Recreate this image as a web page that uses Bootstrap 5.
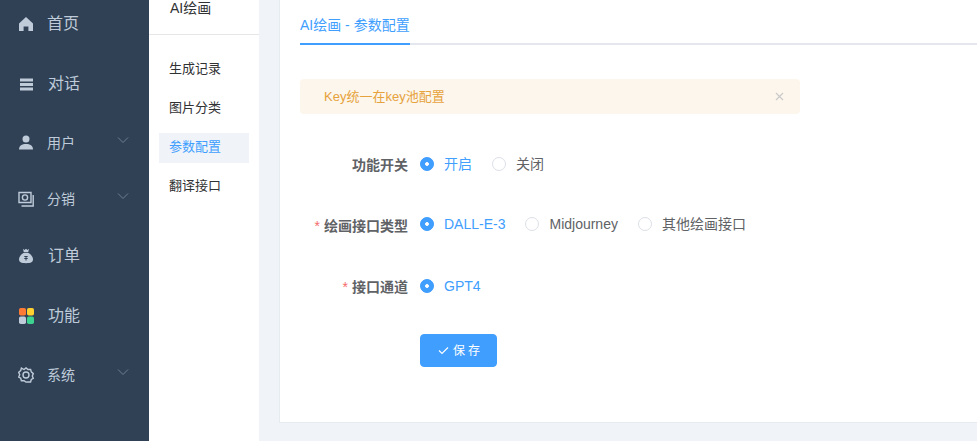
<!DOCTYPE html>
<html lang="zh">
<head>
<meta charset="utf-8">
<title>AI绘画</title>
<link href="https://cdn.jsdelivr.net/npm/bootstrap@5.3.0/dist/css/bootstrap.min.css" rel="stylesheet">
<style>
html,body{height:441px;overflow:hidden}
body{font-family:"Liberation Sans","Noto Sans CJK SC",sans-serif;background:#f0f4f8;color:#606266;font-size:14px}
.shell{height:441px}
.side-main{width:149px;background:#304156;color:#bfcbd9;flex:none;padding-top:0}
.side-item{position:relative;padding-left:18px}
.side-item svg.ico{width:16px;height:16px;flex:none;display:block}
.side-item .lbl{line-height:20px}
.big .lbl{font-size:16px;margin-left:14px}
.big:first-child .lbl{margin-left:13px}
.small-it .lbl{font-size:14px;margin-left:13px}
.it1{height:48px}.it2{height:72px}.it3{height:46px}.it4{height:66px}.it5{height:48px}.it6{height:72px}.it7{height:46px}
.chev{position:absolute;left:117px;width:12px;height:8px;top:50%;margin-top:-7px}
.side-sub{width:110px;background:#fff;flex:none}
.sub-head{height:35px;border-bottom:1px solid #e6e6e6;padding-left:21px;color:#303133;line-height:17px;font-size:14px}
.sub-list{padding:20px 10px 0}
.sub-link{display:block;height:30px;line-height:28px;margin-bottom:9px;padding-left:10px;font-size:13px;color:#303133;text-decoration:none}
.sub-link.on{background:#f0f4f8;color:#409eff}
.work{flex:1;min-width:0;padding:0 0 18px 20px}
.panel{height:423px;background:#fff;border:1px solid #e6ebf0;border-top:0;border-right:0;padding:0 0 0 20px}
.tabline{height:45px;border-bottom:2px solid #e4e7ed;display:flex}
.tabline a{display:block;height:45px;padding-top:15px;line-height:20px;color:#409eff;border-bottom:2px solid #409eff;text-decoration:none;font-size:14px}
.warn{width:500px;height:35px;margin-top:34px;background:#fdf6ec;color:#e6a23c;border-radius:4px;font-size:13px;padding:0 16px 0 24px}
.warn .cross{width:9px;height:9px;display:block}
.frow{height:32px}
.f1{margin-top:34px}.f2{margin-top:28px}.f3{margin-top:30px}
.flabel{width:108px;margin-right:12px;flex:none;text-align:right;font-weight:700;color:#606266;font-size:14px;line-height:20px;white-space:nowrap}
.f1 .flabel{padding-top:2px}.f2 .flabel{padding-top:4px}.f3 .flabel{padding-top:2px}
.star{color:#f56c6c;font-weight:400;margin-right:4px}
.form-check.rad{display:flex;align-items:center;margin:0 20px 0 0;padding:0;min-height:0;font-size:14px;line-height:20px}
.rad .form-check-input{float:none;margin:0 10px 0 0;width:14px;height:14px;border:1px solid #dcdfe6;background-color:#fff}
.rad .form-check-input:checked{background-color:#409eff;border-color:#409eff;background-image:radial-gradient(circle,#fff 1.500px,#409eff 2.200px)}
.rad .form-check-label{color:#606266;opacity:1}
.rad.sel .form-check-label{color:#409eff}
.btn.save{width:77px;height:33px;margin:32px 0 0 120px;background:#409eff;border:1px solid #409eff;border-radius:4px;color:#fff;font-size:12px;padding:0 0 0 4px;letter-spacing:3px;display:flex;align-items:center;justify-content:center}
.btn.save svg{width:11px;height:9px;margin-right:4px}
</style>
</head>
<body>
<div class="shell d-flex">
  <aside class="side-main">
    <div class="side-item big it1 d-flex align-items-center">
      <svg class="ico" viewBox="0 0 16 16"><path fill="#bfcbd9" d="M8 1 1 7.400V15h4.600v-4.600h4.800V15H15V7.400z"/></svg><span class="lbl">首页</span>
    </div>
    <div class="side-item big it2 d-flex align-items-center">
      <svg class="ico" viewBox="0 0 16 16"><path fill="#bfcbd9" d="M2 2.500h13v3H2zM2 7h13v3H2zM2 11.500h13v3H2z"/></svg><span class="lbl">对话</span>
    </div>
    <div class="side-item small-it it3 d-flex align-items-center">
      <svg class="ico" viewBox="0 0 16 16"><circle cx="8" cy="4" r="3.500" fill="#bfcbd9"/><path fill="#bfcbd9" d="M1 14.500c0-3.800 3-5.500 7-5.500s7 1.700 7 5.500z"/></svg><span class="lbl">用户</span>
      <svg class="chev" viewBox="0 0 12 8"><path d="M1 1.500 6 6.500l5-5" fill="none" stroke="#6f7e90" stroke-width="1"/></svg>
    </div>
    <div class="side-item small-it it4 d-flex align-items-center">
      <svg class="ico" viewBox="0 0 16 16" fill="none" stroke="#bfcbd9" stroke-width="1.400"><path d="M1 1.500h12v10H1z"/><path d="M15.200 4v11H3.500"/><circle cx="7" cy="6.500" r="2.600"/></svg><span class="lbl">分销</span>
      <svg class="chev" viewBox="0 0 12 8"><path d="M1 1.500 6 6.500l5-5" fill="none" stroke="#6f7e90" stroke-width="1"/></svg>
    </div>
    <div class="side-item big it5 d-flex align-items-center">
      <svg class="ico" viewBox="0 0 16 16"><path fill="#bfcbd9" d="M5 .8 6.500 2 8 .8 9.500 2 11 .8l-.8 3.400H5.800z"/><path fill="#bfcbd9" d="M5.500 5h5c2.500 1.500 4.500 3.800 4.500 6.300 0 2.700-2 3.900-7 3.900s-7-1.200-7-3.900C1 8.800 3 6.500 5.500 5z"/><path fill="#304156" d="M6.300 8h3.400v.9H6.300zM6.300 10h3.400v.9H6.300zM7.500 8h1v4.500h-1z"/></svg><span class="lbl">订单</span>
    </div>
    <div class="side-item big it6 d-flex align-items-center">
      <svg class="ico" viewBox="0 0 16 16"><rect x="1" y="0" width="7" height="7.500" rx="1.800" fill="#ff7a35"/><rect x="9" y="0" width="7" height="7.500" rx="1.800" fill="#ffd02f"/><rect x="1" y="8.500" width="7" height="7.500" rx="1.800" fill="#bfcbd9"/><rect x="9" y="8.500" width="7" height="7.500" rx="1.800" fill="#3dd28f"/></svg><span class="lbl">功能</span>
    </div>
    <div class="side-item small-it it7 d-flex align-items-center">
      <svg class="ico" viewBox="0 0 16 16" fill="none" stroke="#bfcbd9" stroke-width="1.400"><path d="M8 .9 10 2.500l2.600-.1.700 2.500 2 1.700-1 2.400 1 2.400-2 1.100-.7 2.500-2.600-.1L8 15.100 6 13.600l-2.600.1-.7-2.500-2-1.100 1-2.400-1-2.400 2-1.700.7-2.500L6 2.500z"/><circle cx="8" cy="8" r="3"/></svg><span class="lbl">系统</span>
      <svg class="chev" viewBox="0 0 12 8"><path d="M1 1.500 6 6.500l5-5" fill="none" stroke="#6f7e90" stroke-width="1"/></svg>
    </div>
  </aside>
  <nav class="side-sub">
    <div class="sub-head">AI绘画</div>
    <div class="sub-list">
      <a class="sub-link" href="#">生成记录</a>
      <a class="sub-link" href="#">图片分类</a>
      <a class="sub-link on" href="#">参数配置</a>
      <a class="sub-link" href="#">翻译接口</a>
    </div>
  </nav>
  <main class="work">
    <div class="panel">
      <div class="tabline"><a href="#">AI绘画 - 参数配置</a></div>
      <div class="warn d-flex align-items-center justify-content-between">
        <span>Key统一在key池配置</span>
        <svg class="cross" viewBox="0 0 9 9"><path d="M1 1l7 7M8 1 1 8" stroke="#c9c9c9" stroke-width="1.200" fill="none"/></svg>
      </div>
      <form>
        <div class="frow f1 d-flex align-items-center">
          <label class="flabel">功能开关</label>
          <div class="d-flex">
            <div class="form-check rad sel"><input class="form-check-input" type="radio" name="a" id="a1" checked><label class="form-check-label" for="a1">开启</label></div>
            <div class="form-check rad"><input class="form-check-input" type="radio" name="a" id="a2"><label class="form-check-label" for="a2">关闭</label></div>
          </div>
        </div>
        <div class="frow f2 d-flex align-items-center">
          <label class="flabel"><span class="star">*</span>绘画接口类型</label>
          <div class="d-flex">
            <div class="form-check rad sel"><input class="form-check-input" type="radio" name="b" id="b1" checked><label class="form-check-label" for="b1">DALL-E-3</label></div>
            <div class="form-check rad"><input class="form-check-input" type="radio" name="b" id="b2"><label class="form-check-label" for="b2">Midjourney</label></div>
            <div class="form-check rad"><input class="form-check-input" type="radio" name="b" id="b3"><label class="form-check-label" for="b3">其他绘画接口</label></div>
          </div>
        </div>
        <div class="frow f3 d-flex align-items-center">
          <label class="flabel"><span class="star">*</span>接口通道</label>
          <div class="d-flex">
            <div class="form-check rad sel"><input class="form-check-input" type="radio" name="c" id="c1" checked><label class="form-check-label" for="c1">GPT4</label></div>
          </div>
        </div>
        <button type="button" class="btn save"><svg viewBox="0 0 11 9"><path d="M1 4.500 4 7.500 10 1.500" fill="none" stroke="#fff" stroke-width="1.100"/></svg>保存</button>
      </form>
    </div>
  </main>
</div>
<script src="https://cdn.jsdelivr.net/npm/bootstrap@5.3.0/dist/js/bootstrap.bundle.min.js"></script>
</body>
</html>
